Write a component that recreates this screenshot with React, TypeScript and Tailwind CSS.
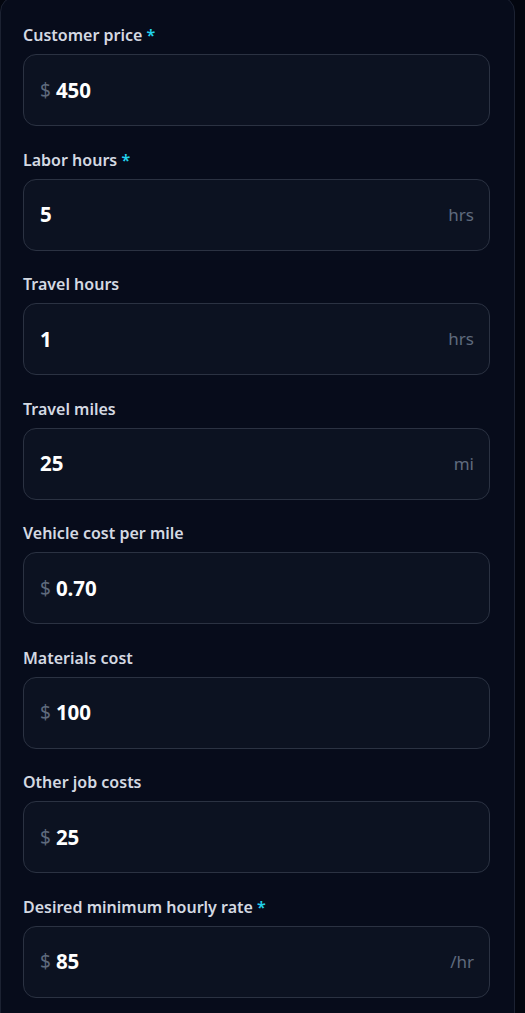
const fields = [
  { label: 'Customer price', required: true, prefix: '$', value: '450' },
  { label: 'Labor hours', required: true, value: '5', suffix: 'hrs' },
  { label: 'Travel hours', value: '1', suffix: 'hrs' },
  { label: 'Travel miles', value: '25', suffix: 'mi' },
  { label: 'Vehicle cost per mile', prefix: '$', value: '0.70' },
  { label: 'Materials cost', prefix: '$', value: '100' },
  { label: 'Other job costs', prefix: '$', value: '25' },
  { label: 'Desired minimum hourly rate', required: true, prefix: '$', value: '85', suffix: '/hr' },
]

export default function App() {
  return (
    <div
      className="min-h-screen bg-[#03060f] overflow-hidden"
      style={{ fontFamily: '"Noto Sans", "Open Sans", sans-serif' }}
    >
      <div className="w-[515px] -mt-[4px] rounded-2xl border border-[#1c2232] bg-[#070c1b] pl-[22px] pr-[24px] pt-[26px] pb-8">
        <div className="flex flex-col gap-[21.5px]">
          {fields.map((f) => (
            <div key={f.label} className="flex flex-col gap-[7px]">
              <label className="text-[16px] leading-6 font-semibold text-[#d4d9e2]">
                {f.label}
                {f.required && <span className="text-[#22d3ee]"> *</span>}
              </label>
              <div className="h-[72px] rounded-[13px] border border-[#2b3242] bg-[#0c1221] flex items-center pl-4 pr-[15px]">
                {f.prefix && (
                  <span className="text-[19px] text-[#5f6a7d] mr-[5px]">{f.prefix}</span>
                )}
                <span className="text-[20.5px] font-bold text-white">{f.value}</span>
                {f.suffix && (
                  <span className="ml-auto text-[17px] text-[#5f6a7d]">{f.suffix}</span>
                )}
              </div>
            </div>
          ))}
        </div>
      </div>
    </div>
  )
}
